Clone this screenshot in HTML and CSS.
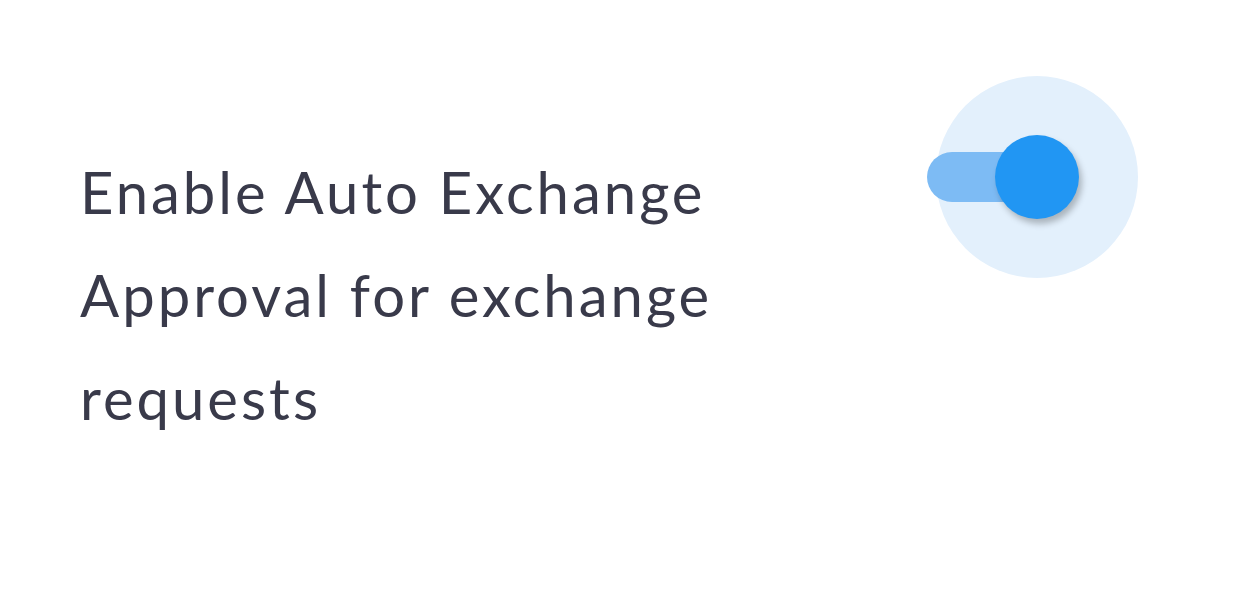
FILE: index.html
```html
<html>
  <head>
    <meta charset="utf-8">
    <title>Auto Exchange</title>
    <link rel="stylesheet" href="styles.css">
  </head>
<body>

<div class="setting-row">
  <label class="setting-label" for="autoExchange">Enable Auto Exchange Approval for exchange requests</label>
  <span class="switch">
    <span class="switch-halo"></span>
    <span class="switch-track"></span>
    <span class="switch-thumb"></span>
    <input type="checkbox" id="autoExchange" checked="">
  </span>
</div>

</body></html>
```

FILE: styles.css
```css
body {
  margin: 0;
  background: #fff;
  font-family: Lato, "Open Sans", sans-serif;
}

.setting-row {
  display: flex;
  align-items: flex-start;
  padding: 140px 0 0 80px;
}

.setting-label {
  width: 680px;
  font-size: 58px;
  letter-spacing: 3px;
  line-height: 103px;
  color: #393a4a;
}

.switch {
  position: relative;
  display: inline-block;
  flex-shrink: 0;
  width: 212px;
  height: 204px;
  margin: -64px 0 0 167px;
}

.switch-halo {
  position: absolute;
  left: 9px;
  top: 0;
  width: 202px;
  height: 202px;
  border-radius: 50%;
  background: #e3f0fc;
}

.switch-track {
  position: absolute;
  left: 0;
  top: 76px;
  width: 143px;
  height: 50px;
  border-radius: 25px;
  background: #7dbbf4;
}

.switch-thumb {
  position: absolute;
  left: 68px;
  top: 59px;
  width: 84px;
  height: 84px;
  border-radius: 50%;
  background: #2196f3;
  box-shadow: 3px 5px 6px rgba(0, 0, 0, 0.25);
}

.switch input {
  position: absolute;
  left: 9px;
  top: 0;
  width: 202px;
  height: 202px;
  margin: 0;
  opacity: 0;
  cursor: pointer;
}
```
